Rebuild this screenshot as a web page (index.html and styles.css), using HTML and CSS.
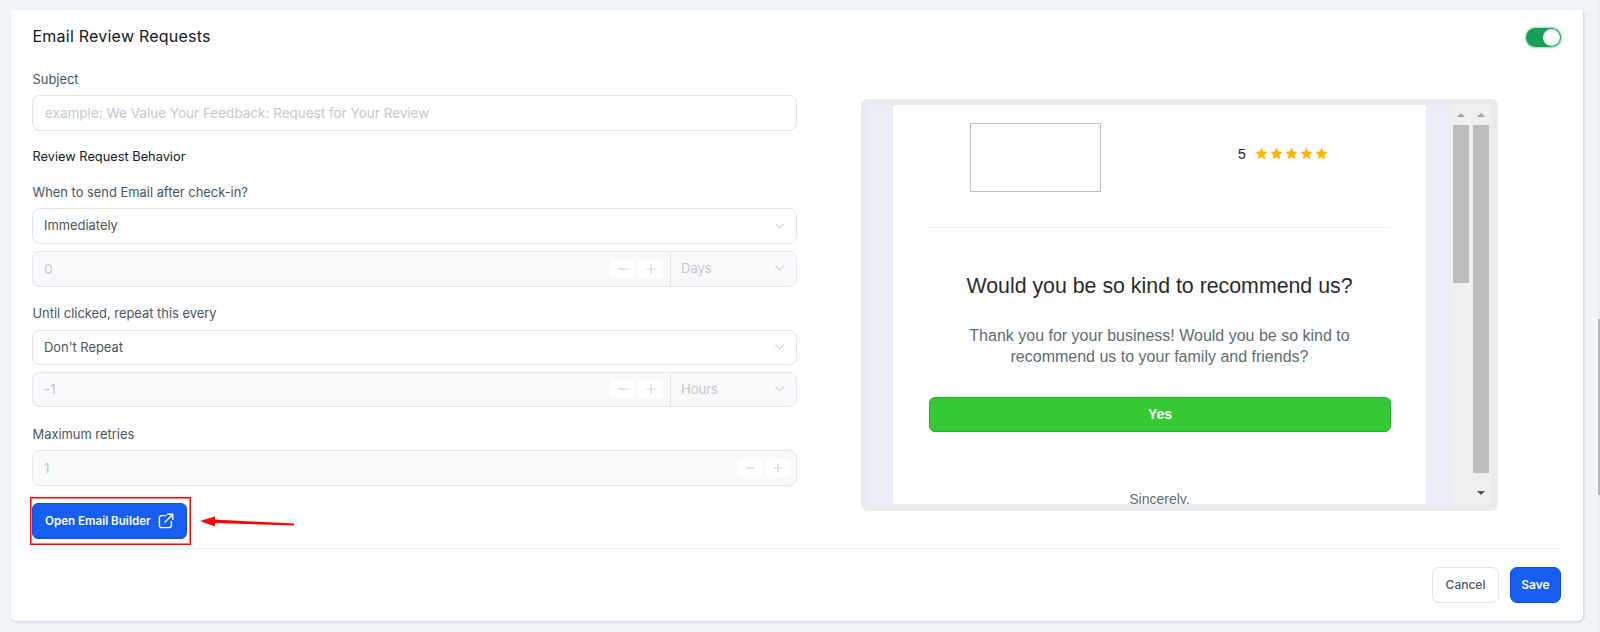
FILE: index.html
```html
<!DOCTYPE html>
<html lang="en">
<head>
<meta charset="utf-8">
<title>Email Review Requests</title>
<link rel="stylesheet" href="styles.css">
</head>
<body>
<svg class="defs" width="0" height="0" aria-hidden="true"><symbol id="star" viewBox="0 0 24 24"><path d="M12 1.2l3.3 7.2 7.7.9-5.7 5.3 1.5 7.8L12 18.5l-6.8 3.9 1.5-7.8L1 9.3l7.7-.9z"/></symbol></svg>
<main class="card">
  <header class="card-head">
    <h1 class="title">Email Review Requests</h1>
    <span class="toggle"><span class="knob"></span></span>
  </header>
  <div class="columns">
    <form class="form">
      <label class="label first">Subject</label>
      <div class="field placeholder">example: We Value Your Feedback: Request for Your Review</div>
      <h2 class="section">Review Request Behavior</h2>
      <label class="label when">When to send Email after check-in?</label>
      <div class="field select"><span>Immediately</span><svg class="chev" viewBox="0 0 12 8"><path d="M1.5 1.5 6 6l4.5-4.5"/></svg></div>
      <div class="field number">
        <span class="num">0</span>
        <span class="step"><svg viewBox="0 0 12 12"><path d="M1.5 6h9"/></svg></span>
        <span class="step"><svg viewBox="0 0 12 12"><path d="M1.5 6h9M6 1.5v9"/></svg></span>
        <span class="unit raised">Days<svg class="chev" viewBox="0 0 12 8"><path d="M1.5 1.5 6 6l4.5-4.5"/></svg></span>
      </div>
      <label class="label until">Until clicked, repeat this every</label>
      <div class="field select tight"><span>Don't Repeat</span><svg class="chev" viewBox="0 0 12 8"><path d="M1.5 1.5 6 6l4.5-4.5"/></svg></div>
      <div class="field number tight">
        <span class="num">-1</span>
        <span class="step"><svg viewBox="0 0 12 12"><path d="M1.5 6h9"/></svg></span>
        <span class="step"><svg viewBox="0 0 12 12"><path d="M1.5 6h9M6 1.5v9"/></svg></span>
        <span class="unit">Hours<svg class="chev" viewBox="0 0 12 8"><path d="M1.5 1.5 6 6l4.5-4.5"/></svg></span>
      </div>
      <label class="label retries">Maximum retries</label>
      <div class="field number">
        <span class="num">1</span>
        <span class="step"><svg viewBox="0 0 12 12"><path d="M1.5 6h9"/></svg></span>
        <span class="step"><svg viewBox="0 0 12 12"><path d="M1.5 6h9M6 1.5v9"/></svg></span>
      </div>
      <div class="builder-row">
        <button type="button" class="btn primary builder">Open Email Builder
          <svg class="ext" viewBox="0 0 16 16"><path d="M8 2.6H3.6a2.2 2.2 0 0 0-2.2 2.2v7.6a2.2 2.2 0 0 0 2.2 2.2h7.6a2.2 2.2 0 0 0 2.2-2.2V8.4M9.6 1.2h5.2v5.2M14.6 1.4 7 9"/></svg>
        </button>
        <span class="redbox"></span>
        <svg class="arrow" viewBox="0 0 94 13"><path d="M14 3.6 94 7.6V9.6L14 7z"/><path d="M0 5 15 0.5V10.5z"/></svg>
      </div>
    </form>
    <section class="preview">
      <div class="preview-inner">
        <div class="gutter"></div>
        <div class="email">
          <div class="email-top">
            <div class="logo"></div>
            <div class="rating"><span>5</span><span class="stars">
              <svg class="star"><use href="#star"/></svg>
              <svg class="star"><use href="#star"/></svg>
              <svg class="star"><use href="#star"/></svg>
              <svg class="star"><use href="#star"/></svg>
              <svg class="star"><use href="#star"/></svg>
            </span></div>
          </div>
          <hr class="email-rule">
          <h3 class="email-title">Would you be so kind to recommend us?</h3>
          <p class="email-text">Thank you for your business! Would you be so kind to recommend us to your family and friends?</p>
          <div class="yes">Yes</div>
          <p class="sign">Sincerely,</p>
        </div>
        <div class="gutter"></div>
        <div class="scroll">
          <div class="track"><i class="up"></i><b class="thumb short"></b></div>
          <div class="track"><i class="up"></i><b class="thumb long"></b><i class="down"></i></div>
        </div>
      </div>
    </section>
  </div>
  <footer class="foot">
    <button type="button" class="btn cancel">Cancel</button>
    <button type="button" class="btn primary save">Save</button>
  </footer>
</main>
<div class="page-scroll"><span class="page-thumb"></span></div>
</body>
</html>
```
FILE: styles.css
```css
* { box-sizing: border-box; }
html, body { height: 100%; }
body {
  margin: 0;
  padding: 10px 17px 11px 11px;
  background: #f1f5f8;
  font-family: Inter, "Liberation Sans", sans-serif;
  overflow: hidden;
}
.defs { position: absolute; }
.card {
  height: 611px;
  background: #fff;
  border-radius: 0 0 6px 6px;
  box-shadow: 1px 1px 3px rgba(150, 160, 175, .45);
  padding: 0 22px 0 21px;
  display: flex;
  flex-direction: column;
}
.card-head {
  height: 50px;
  display: flex;
  align-items: center;
  justify-content: space-between;
  flex: none;
}
.title {
  margin: 0;
  padding: 2px 0 0 .5px;
  font-size: 16px;
  letter-spacing: .23px;
  font-weight: 400;
  color: #111827;
}
.toggle {
  width: 35px;
  height: 19px;
  margin-top: 4px;
  border-radius: 10px;
  background: #18a058;
  box-shadow: 0 0 2px 1px rgba(24, 160, 88, .45);
  display: flex;
  justify-content: flex-end;
  align-items: center;
  padding-right: 1px;
}
.knob {
  width: 17px;
  height: 17px;
  border-radius: 50%;
  background: #fff;
}
.columns {
  display: flex;
  align-items: flex-start;
  flex: none;
  height: 489px;
  border-bottom: 1px solid #eff0f3;
}
.form { width: 765px; flex: none; }
.label {
  display: block;
  font-size: 12.9px;
  line-height: 16px;
  color: #4b5563;
  margin: 0 0 8px;
  padding-left: .5px;
}
.label.first { margin-top: 12px; margin-bottom: 7px; }
.label.when { margin-bottom: 7px; }
.label.until { margin: 19px 0 8px; }
.label.retries { margin: 20px 0 7px; }
.section {
  margin: 18px 0 20px;
  padding-left: .5px;
  font-size: 12.8px;
  line-height: 16px;
  font-weight: 400;
  color: #111827;
}
.field {
  display: flex;
  align-items: center;
  height: 36px;
  border: 1px solid #e2e4ec;
  border-radius: 8px;
  padding: 0 0 0 11px;
  font-size: 13px;
  color: #374151;
  background: #fff;
}
.field.tight { height: 35px; }
.placeholder { color: #c4c7cd; font-size: 13.5px; padding-left: 12px; padding-bottom: 1px; }
.select { justify-content: space-between; padding-right: 11px; color: #4b5563; font-size: 12.9px; padding-bottom: 1px; }
.chev { width: 11px; height: 8px; fill: none; stroke: #c9ccd3; stroke-width: 1.1; flex: none; }
.number { background: #f9f9fb; margin-top: 7px; color: #c2c5cc; font-size: 13.5px; padding-bottom: 1px; }
.num { flex: 1; }
.step {
  width: 25px;
  height: 18px;
  margin-right: 3px;
  background: #fff;
  border-radius: 4px;
  display: flex;
  align-items: center;
  justify-content: center;
}
.step svg { width: 12px; height: 12px; fill: none; stroke: #cfd2d8; stroke-width: 1.2; }
.number > .step:last-child { margin-right: 6px; }
.unit {
  width: 126px;
  height: 100%;
  margin-left: 4px;
  margin-bottom: -1px;
  border-left: 1px solid #e2e4ec;
  display: flex;
  align-items: center;
  justify-content: space-between;
  padding: 0 11px 1px 10px;
  color: #c4c7cd;
  font-size: 13px;
}
.unit.raised { padding-bottom: 3px; }
.builder-row {
  position: relative;
  margin-top: 17px;
  height: 36px;
}
.btn {
  font-family: inherit;
  font-size: 12px;
  font-weight: 600;
  height: 36px;
  border-radius: 7px;
  padding-bottom: 2px;
  cursor: pointer;
}
.primary { background: #155eef; border: 1px solid #0f51dc; color: #fff; }
.builder {
  width: 155px;
  border-radius: 6px;
  display: flex;
  align-items: center;
  justify-content: space-between;
  padding: 0 12px 0 12px;
  font-size: 11.6px;
  white-space: nowrap;
}
.ext { width: 16px; height: 16px; fill: none; stroke: #fff; stroke-width: 1.4; stroke-linecap: round; stroke-linejoin: round; }
.redbox {
  position: absolute;
  left: -2px;
  top: -6px;
  width: 161px;
  height: 48px;
  border: 1px solid #f00;
  box-shadow: inset 0 0 0 1px rgba(255, 0, 0, .5);
}
.arrow {
  position: absolute;
  left: 168px;
  top: 13px;
  width: 94px;
  height: 13px;
  fill: #f00;
}
.preview {
  margin-left: 64px;
  margin-top: 39px;
  width: 637px;
  height: 412px;
  padding: 6px 7px 7px 7px;
  background: #e9ebef;
  border-radius: 7px;
  flex: none;
}
.preview-inner {
  display: flex;
  height: 100%;
  overflow: hidden;
  background: #e9eef6;
}
.gutter { width: 25px; flex: none; }
.email {
  width: 533px;
  flex: none;
  background: #fff;
  padding: 18px 35px 0;
  font-family: "Liberation Sans", Arial, sans-serif;
  text-align: center;
  overflow: hidden;
}
.email-top {
  display: flex;
  padding-left: 42px;
  height: 69px;
}
.logo {
  width: 131px;
  height: 69px;
  border: 1px solid #bfbfbf;
}
.rating {
  margin-left: 137px;
  display: flex;
  align-items: flex-start;
  gap: 9px;
  font-size: 14px;
  color: #222;
  line-height: 16px;
  padding-top: 23px;
}
.stars { display: flex; gap: 2px; margin-top: 1px; fill: #ffb400; }
.star { width: 13px; height: 13px; display: block; }
.email-rule {
  margin: 35px 0 0;
  border: 0;
  border-top: 1px solid #f3f3f3;
}
.email-title {
  margin: 45px -10px 0;
  font-size: 21.33px;
  line-height: 26px;
  font-weight: 400;
  color: #2b2b2b;
}
.email-text {
  margin: 26px auto 0;
  width: 410px;
  font-size: 16px;
  line-height: 21px;
  color: #5f6b73;
}
.yes {
  margin: 30px 0 0 1px;
  height: 35px;
  line-height: 33px;
  background: #35ca35;
  border: 1px solid #1fb81f;
  border-radius: 6px;
  color: #fff;
  font-weight: 700;
  font-size: 14px;
}
.sign {
  margin: 59px 0 0;
  font-size: 14px;
  line-height: 16px;
  color: #5f6b73;
}
.scroll {
  width: 40px;
  flex: none;
  background: #f0f0f0;
  display: flex;
  gap: 4px;
  padding: 0 2px;
}
.track { width: 16px; position: relative; padding-top: 20px; }
.thumb { display: block; background: #bdbdbd; width: 16px; }
.thumb.short { height: 158px; }
.thumb.long { height: 348px; }
.up, .down {
  position: absolute;
  left: 4px;
  width: 0;
  height: 0;
  border-left: 4px solid transparent;
  border-right: 4px solid transparent;
}
.up { top: 8px; border-bottom: 4px solid #a3a3a3; }
.down { top: 386px; border-top: 4px solid #505050; }
.foot {
  display: flex;
  justify-content: flex-end;
  gap: 11px;
  padding-top: 18px;
}
.cancel { width: 67px; background: #fff; border: 1px solid #e0e2e8; color: #4b5563; font-weight: 500; }
.save { width: 51px; }
.page-scroll {
  position: fixed;
  top: 0;
  right: 0;
  width: 2px;
  height: 100%;
  background: #efefef;
}
.page-thumb {
  position: absolute;
  top: 319px;
  left: 0;
  width: 2px;
  height: 176px;
  background: #b5b5b5;
}
```
